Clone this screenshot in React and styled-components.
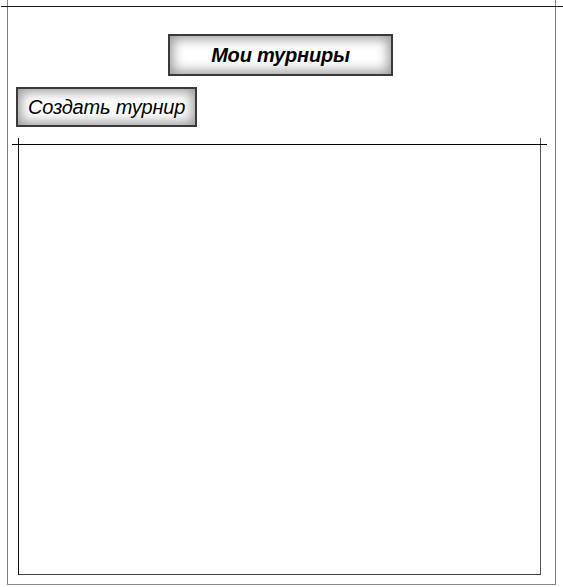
import React from "react";
import styled, { createGlobalStyle } from "styled-components";

const Global = createGlobalStyle`
  html, body { margin: 0; padding: 0; background: #ffffff; }
  body { font-family: "Liberation Sans", Arial, sans-serif; }
  * { box-sizing: border-box; }
`;

const Frame = styled.div`
  position: relative;
  margin: 6px 0 0 7px;
  width: 549px;
  height: 579px;
  border-top: 1px solid #1e1e1e;
  border-left: 1px solid #7d7d7d;
  border-right: 1px solid #7d7d7d;
  border-bottom: 1px solid #8a8a8a;
  display: flex;
  flex-direction: column;
  padding: 27px 0 9px 0;

  &::before {
    content: "";
    position: absolute;
    top: -7px;
    left: -1px;
    right: -1px;
    height: 7px;
    border-left: 1px solid #8a8a8a;
    border-right: 1px solid #8a8a8a;
  }
  &::after {
    content: "";
    position: absolute;
    top: -1px;
    left: -7px;
    right: -8px;
    height: 1px;
    background: #1e1e1e;
  }
`;

const SketchButton = styled.div`
  display: flex;
  align-items: center;
  justify-content: center;
  width: ${(p) => p.$w}px;
  height: ${(p) => p.$h}px;
  border: 2px solid #3a3a3a;
  background: #ffffff;
  box-shadow: inset 0 0 12px 3px rgba(0, 0, 0, 0.4);
  font-family: "Liberation Sans", Arial, sans-serif;
  font-style: italic;
  font-weight: ${(p) => (p.$bold ? 700 : 400)};
  font-size: 20px;
  letter-spacing: -0.2px;
  color: #000;
  white-space: nowrap;
`;

const TitleButton = styled(SketchButton)`
  align-self: center;
  margin-right: 2px;
`;

const CreateButton = styled(SketchButton)`
  margin: 11px 0 0 8px;
`;

const Panel = styled.div`
  position: relative;
  margin: 17px 0 0 10px;
  width: 523px;
  height: 431px;
  border-top: 1px solid #000;
  border-left: 1px solid #111;
  border-right: 1px solid #555;
  border-bottom: 1px solid #444;

  &::before {
    content: "";
    position: absolute;
    top: -7px;
    left: -1px;
    right: -1px;
    height: 7px;
    border-left: 1px solid #111;
    border-right: 1px solid #555;
  }
  &::after {
    content: "";
    position: absolute;
    top: -1px;
    left: -7px;
    right: -7px;
    height: 1px;
    background: #000;
  }
`;

export default function App() {
  return (
    <>
      <Global />
      <Frame>
        <TitleButton $w={225} $h={42} $bold>
          Мои турниры
        </TitleButton>
        <CreateButton $w={181} $h={40}>
          Создать турнир
        </CreateButton>
        <Panel />
      </Frame>
    </>
  );
}
